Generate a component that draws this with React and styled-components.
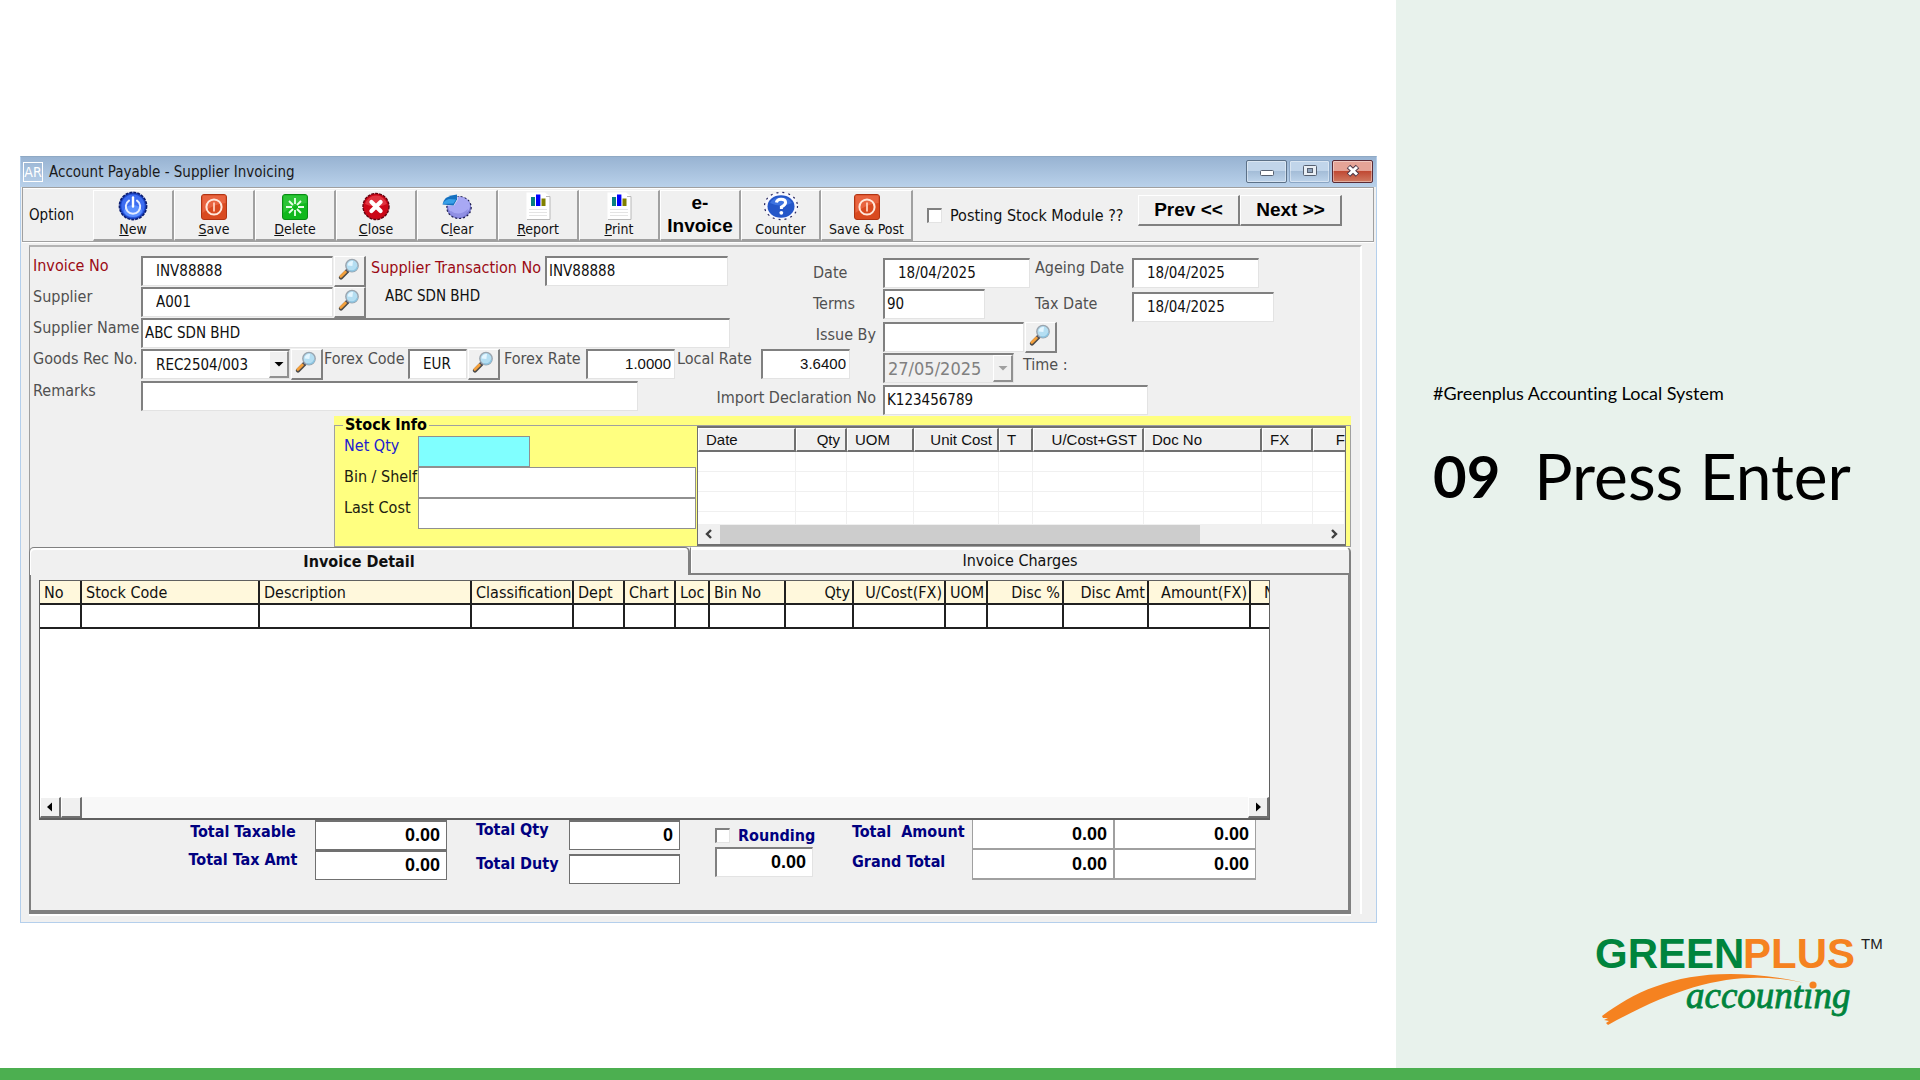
import React, { useState } from "react";
import styled, { createGlobalStyle, css } from "styled-components";

const GlobalStyle = createGlobalStyle`
  * {
    box-sizing: border-box;
  }
  body {
    margin: 0;
    background: #ffffff;
    color: #101010;
    font-family: "DejaVu Sans Condensed", "Noto Sans", sans-serif;
    font-size: 15px;
  }
  input, select, button {
    font-family: inherit;
    font-size: inherit;
    color: inherit;
    border-radius: 0;
    margin: 0;
  }
`;

const Page = styled.div`
  display: flex;
  flex-direction: column;
  min-height: 100vh;
`;

const Slide = styled.div`
  display: flex;
  flex: 1;
`;

const Stage = styled.main`
  flex: 1;
  padding: 156px 19px 0 20px;
`;

const Side = styled.aside`
  display: flex;
  flex-direction: column;
  justify-content: space-between;
  width: 524px;
  padding: 380px 36px 36px 37px;
  background: #e8f2ec;
  color: #000000;
  font-family: Lato, "Open Sans", sans-serif;
  font-variant-ligatures: none;
`;

const Tag = styled.p`
  margin: 0 0 34px;
  font-size: 18px;
  line-height: 26px;
`;

const Step = styled.h1`
  display: flex;
  align-items: center;
  gap: 34px;
  margin: 0;
  font-size: 64px;
  line-height: 72px;
  font-weight: 400;
  white-space: nowrap;

  b {
    font-size: 58px;
    line-height: 66px;
  }
`;

const LogoBox = styled.div`
  align-self: flex-end;
  height: 100px;
`;

const Footer = styled.footer`
  height: 12px;
  background: #4caf50;
`;

const Window = styled.section`
  background: #f0f0f0;
  border: 1px solid #b4cfec;
  border-top-color: #8fa9c4;
`;

const TitleBar = styled.header`
  display: flex;
  align-items: center;
  height: 30px;
  padding: 0 3px 0 2px;
  background: linear-gradient(#98b3d2, #b9d1ea);
  color: #1a1a1a;

  span {
    margin-left: 6px;
    flex: 1;
  }
`;

const AppBadge = styled.i`
  width: 20px;
  height: 20px;
  border: 1px solid #ffffff;
  color: #ffffff;
  font-size: 14px;
  font-style: normal;
  line-height: 18px;
  text-align: center;
`;

const WinButton = styled.button`
  display: flex;
  align-items: center;
  justify-content: center;
  width: 41px;
  height: 23px;
  margin: 0 0 2px 2px;
  padding: 0;
  border: 1px solid ${(p) => (p.$soft ? "#8ba6c5" : "#5c7188")};
  border-radius: 2px;
  background: linear-gradient(#c1d5ea 45%, #a4bdd8 50%, #bdd3ea);
  box-shadow: inset 0 0 0 1px rgba(255, 255, 255, 0.4);

  ${(p) =>
    p.$close &&
    css`
      border-color: #5a2a35;
      background: linear-gradient(#e5a497 45%, #c04a34 50%, #d07a62);
    `}
`;

const Toolbar = styled.nav`
  display: flex;
  height: 55px;
  margin: 0 2px 0 1px;
  padding-top: 2px;
  border: 1px solid #a0a0a0;
  box-shadow: 0 1px 0 #ffffff, inset 0 1px 0 #ffffff;
`;

const OptionText = styled.span`
  width: 70px;
  padding-left: 6px;
  line-height: 50px;
`;

const ToolButton = styled.button`
  display: flex;
  flex-direction: column;
  align-items: center;
  width: ${(p) => p.$width || 81}px;
  height: 51px;
  padding: 0 0 2px;
  border: solid;
  border-width: 1px 2px 2px 1px;
  border-color: #ffffff #a0a0a0 #a0a0a0 #ffffff;
  background: #f0f0f0;
  font-size: 14px;
  line-height: 17px;
  white-space: nowrap;

  svg {
    flex: none;
  }
`;

const BigText = styled.span`
  font-family: "Liberation Sans", Arial, sans-serif;
  font-size: 19px;
  font-weight: 700;
  line-height: 23px;
  color: #000000;
  white-space: pre-line;
`;

const CheckLabel = styled.label`
  display: flex;
  align-items: center;
  gap: 8px;
  white-space: nowrap;
  font-size: 16px;
  font-weight: ${(p) => (p.$bold ? 700 : 400)};
  color: ${(p) => (p.$bold ? "#000080" : "#101010")};
`;

const CheckBox = styled.input.attrs({ type: "checkbox" })`
  appearance: none;
  width: 15px;
  height: 15px;
  border: solid;
  border-width: 2px 1px 1px 2px;
  border-color: #808080 #e3e3e3 #e3e3e3 #808080;
  background: #ffffff;

  &:checked {
    background: #404040;
  }
`;

const ToolbarCheck = styled.div`
  display: flex;
  padding: 0 0 0 14px;
`;

const Pager = styled.div`
  display: flex;
  margin: 5px 31px 0 auto;
`;

const PagerButton = styled.button`
  width: 102px;
  height: 31px;
  padding: 0 0 2px;
  border: solid;
  border-width: 1px 2px 2px 1px;
  border-color: #ffffff #808080 #808080 #ffffff;
  background: #f0f0f0;
`;

const Body = styled.div`
  padding: 3px 14px 8px 8px;
`;

const Panel = styled.div`
  border-top: 2px solid #b4b4b4;
  border-right: 2px solid #ffffff;
  border-left: 1px solid #a0a0a0;
`;

const Form = styled.form`
  display: grid;
  grid-template-columns: 850px 1fr;
  padding: 9px 0 0 3px;
`;

const MainFields = styled.div`
  display: grid;
  grid-template-rows: repeat(3, 31px) repeat(2, 32px);
`;

const DateFields = styled.div`
  display: grid;
  grid-template-rows: 31px 33px 31px 32px 31px;
  padding-top: 2px;
`;

const Row = styled.div`
  display: flex;
  align-items: flex-start;
`;

const Label = styled.label`
  flex: none;
  width: ${(p) => (p.$width ? `${p.$width}px` : "auto")};
  padding-top: ${(p) => p.$drop || 0}px;
  padding-left: ${(p) => p.$indent || 0}px;
  font-size: 16px;
  line-height: 20px;
  white-space: nowrap;
  color: ${(p) => (p.$required ? "#9b0a14" : "#505050")};
`;

const EndLabel = styled(Label)`
  margin-left: auto;
  min-width: ${(p) => (p.$tight ? 0 : 70)}px;
  padding-top: 7px;
  padding-right: ${(p) => (p.$tight ? 7 : 0)}px;
`;

const SupplierText = styled.span`
  padding-left: 18px;
  line-height: 18px;
`;

const sunken = css`
  border: solid;
  border-width: 2px 1px 1px 2px;
  border-color: #808080 #e3e3e3 #e3e3e3 #808080;
  outline: 0;
`;

const Field = styled.input`
  ${sunken}
  flex: none;
  align-self: ${(p) => (p.$low ? "flex-end" : "flex-start")};
  width: ${(p) => p.$width}px;
  height: 30px;
  padding: 0 3px 2px ${(p) => (p.$indent ? 13 : 2)}px;
  background: #ffffff;
  text-align: ${(p) => (p.$number ? "right" : "left")};
  ${(p) => p.$number && 'font-family: "Liberation Sans", Arial, sans-serif;'}
`;

const SelectBox = styled.div`
  ${sunken}
  display: flex;
  width: ${(p) => p.$width}px;
  height: 30px;
  background: ${(p) => (p.$disabled ? "#f0f0f0" : "#ffffff")};
  position: relative;

  select {
    appearance: none;
    flex: 1;
    border: 0;
    outline: 0;
    background: transparent;
    opacity: 1;
    padding: 0 20px 0 ${(p) => (p.$disabled ? 3 : 13)}px;
    font-size: ${(p) => (p.$disabled ? 18 : 15)}px;
    color: ${(p) => (p.$disabled ? "#808080" : "#101010")};
  }
`;

const SelectArrow = styled.span`
  display: flex;
  align-items: center;
  justify-content: center;
  position: absolute;
  top: 0;
  right: 0;
  bottom: 0;
  width: 20px;
  border: solid;
  border-width: 1px 2px 2px 1px;
  border-color: #ffffff #909090 #909090 #ffffff;
  background: #f0f0f0;
  pointer-events: none;
`;

const FindButton = styled.button`
  flex: none;
  width: 32px;
  height: 31px;
  margin: 0 1px;
  padding: 0 2px 4px 0;
  border: solid;
  border-width: 1px 2px 2px 1px;
  border-color: #ffffff #808080 #808080 #ffffff;
  background: #f0f0f0;

  svg {
    display: block;
    margin: 0 auto;
  }
`;

const StockArea = styled.div`
  margin: 0 9px 0 304px;
  background: #ffff80;
`;

const StockBox = styled.fieldset`
  min-width: 0;
  margin: 0;
  padding: 0 4px 0 9px;
  border: 1px solid #a0a0a0;

  legend {
    padding: 0 2px;
    margin-left: -1px;
    font-size: 16px;
    font-weight: 700;
    line-height: 18px;
    color: #000000;
  }
`;

const StockBody = styled.div`
  display: flex;
  height: 112px;
`;

const StockFields = styled.div`
  display: grid;
  grid-template-columns: 74px 278px;
  grid-template-rows: repeat(3, 31px);
  padding-top: 2px;
  flex: none;

  label {
    color: #202010;
  }
  label:first-child {
    color: #2020d0;
  }
`;

const StockInput = styled.input`
  width: ${(p) => (p.$short ? 112 : 278)}px;
  height: 31px;
  border: 1px solid #909090;
  outline: 0;
  background: ${(p) => (p.$short ? "#80ffff" : "#ffffff")};
`;

const History = styled.div`
  display: flex;
  flex-direction: column;
  flex: 1;
  min-width: 0;
  margin-top: -8px;
  margin-left: 1px;
  border: 2px solid #707070;
  border-right-width: 1px;
  border-left-width: 1px;
  background: #ffffff;
  overflow: hidden;
`;

const HistoryTable = styled.table`
  width: 100%;
  border-collapse: separate;
  border-spacing: 0;
  table-layout: fixed;
  font-family: "Liberation Sans", Arial, sans-serif;

  th {
    height: 24px;
    padding: 0 5px 0 7px;
    border: solid;
    border-width: 1px 2px 2px 1px;
    border-color: #ffffff #707070 #707070 #ffffff;
    background: #f0f0f0;
    font-weight: 400;
    overflow: hidden;
    white-space: nowrap;
  }
  th:last-child {
    padding-right: 0;
    border-right: 0;
  }
  td {
    height: 20px;
    padding: 0;
    border: solid #f0f0f0;
    border-width: 0 1px 1px 0;
  }
  tr:last-child td {
    height: 12px;
    border-bottom: 0;
  }
`;

const FlatScroll = styled.div`
  display: flex;
  align-items: center;
  justify-content: space-between;
  height: 20px;
  margin-top: auto;
  padding: 0 6px;
  background: #f0f0f0;
`;

const FlatTrack = styled.div`
  flex: 1;
  height: 19px;
  margin: 0 10px 0 7px;

  &::before {
    content: "";
    display: block;
    width: 80%;
    height: 19px;
    background: #cdcdcd;
  }
`;

const Tabs = styled.div`
  display: flex;
  margin-right: 9px;
  margin-left: -1px;
`;

const Tab = styled.button`
  flex: 1;
  height: 28px;
  padding: 0;
  border: solid;
  border-width: 1px 2px 0 1px;
  border-color: #808080;
  border-radius: 5px 5px 0 0;
  background: #f0f0f0;
  box-shadow: inset 1px 2px 0 #ffffff;
  font-size: 16px;
  font-weight: ${(p) => (p.$active ? 700 : 400)};

  ${(p) =>
    !p.$active &&
    css`
      border-top-color: #ffffff;
      border-bottom: 2px solid #808080;
      border-radius: 0 5px 0 0;
    `}
`;

const TabPage = styled.div`
  margin-right: 9px;
  margin-left: -1px;
  padding: 5px 0 0 8px;
  border: solid #808080;
  border-width: 0 3px 4px 2px;
  box-shadow: 0 2px 0 #ffffff;
`;

const GridBox = styled.div`
  display: flex;
  flex-direction: column;
  max-width: 1231px;
  height: 240px;
  border: 1px solid #606060;
  border-bottom-width: 2px;
  background: #ffffff;
  overflow: hidden;
`;

const GridTable = styled.table`
  width: 100%;
  border-collapse: separate;
  border-spacing: 0;
  table-layout: fixed;
  font-size: 16px;

  th, td {
    height: 24px;
    padding: 0 2px 0 4px;
    border: solid #202020;
    border-width: 0 2px 2px 0;
    white-space: nowrap;
  }
  th {
    background: #fff8dc;
    font-weight: 400;
    overflow: hidden;
  }
  th:last-child, td:last-child {
    padding-left: 13px;
    padding-right: 0;
    border-right: 0;
  }
`;

const ClassicScroll = styled.div`
  display: flex;
  height: 21px;
  margin-top: auto;
  background: #f8f8f8;
`;

const ScrollButton = styled.button`
  display: flex;
  align-items: center;
  justify-content: center;
  width: 21px;
  height: 21px;
  padding: 0;
  border: solid;
  border-width: 1px 2px 2px 1px;
  border-color: #ffffff #707070 #707070 #ffffff;
  background: #f0f0f0;

  &:last-child {
    margin-left: auto;
  }
`;

const Totals = styled.div`
  display: flex;
  align-items: flex-start;
  height: 90px;
  padding-left: 141px;
`;

const TotalGroup = styled.div`
  display: grid;
  grid-template-columns: ${(p) => p.$columns};
  row-gap: ${(p) => p.$gap || 0}px;
  margin-right: ${(p) => p.$space}px;
`;

const TotalLabel = styled.label`
  padding-top: ${(p) => p.$drop || 0}px;
  padding-right: 9px;
  color: #000080;
  font-size: 16px;
  font-weight: 700;
  line-height: 20px;
  white-space: pre;
  text-align: ${(p) => (p.$center ? "center" : "left")};
`;

const TotalInput = styled.input`
  width: 100%;
  height: 30px;
  padding: 0 6px 0 5px;
  border: solid ${(p) => (p.$light ? "#a0a0a0" : "#707070")};
  border-width: ${(p) => (p.$light ? "0 1px 2px 1px" : "2px 1px 1px 1px")};
  outline: 0;
  background: #ffffff;
  color: #000000;
  font-family: "Liberation Sans", Arial, sans-serif;
  font-size: 18px;
  font-weight: 700;
  text-align: right;
`;

const RoundingBox = styled.div`
  width: 104px;
  margin-right: 33px;
  padding-top: 6px;

  ${TotalInput} {
    ${sunken}
    width: 98px;
    margin-top: 2px;
  }
`;

function FindIcon() {
  return (
    <svg width="22" height="22" viewBox="0 0 22 22">
      <path d="M3 19.4 L9.4 13" stroke="#4c4a48" strokeWidth="4.2" strokeLinecap="round" />
      <path d="M2.8 18.4 L7.6 13.8" stroke="#f4a03c" strokeWidth="2.8" strokeLinecap="round" />
      <path d="M8.4 13.4 L10 11.8" stroke="#50505c" strokeWidth="3.4" />
      <circle cx="14" cy="7.6" r="6.2" fill="#b4def2" stroke="#9aa4ae" strokeWidth="1.4" />
      <path d="M9.6 7.4 A4.6 4.6 0 0 1 15 3 L14.4 8 Z" fill="#e4f6ff" />
      <path d="M12 12.6 A5.6 5.6 0 0 0 19.4 9" fill="none" stroke="#8cc4e0" strokeWidth="1.4" />
    </svg>
  );
}

function PowerIcon() {
  return (
    <svg width="30" height="30" viewBox="0 0 30 30">
      <circle cx="15" cy="15" r="13.6" fill="#1c46c8" stroke="#0a1c70" strokeWidth="1.6" strokeDasharray="3 1" />
      <circle cx="15" cy="15" r="11.6" fill="#3c6cf0" />
      <ellipse cx="15" cy="20" rx="9" ry="6" fill="#5c90ff" />
      <path d="M11 9.6 a7.2 7.2 0 1 0 8 0" fill="none" stroke="#e4ecff" strokeWidth="2" strokeLinecap="round" />
      <path d="M15 6.5 V15.5" stroke="#ffffff" strokeWidth="2.4" strokeLinecap="round" />
    </svg>
  );
}

function SaveIcon() {
  return (
    <svg width="30" height="30" viewBox="0 0 30 30">
      <rect x="2.5" y="3.5" width="25" height="25" rx="2.5" fill="#d94a20" stroke="#b03414" />
      <path d="M3.5 4.5 H26.5 V12 Q14 13 3.5 22 Z" fill="#e86440" />
      <circle cx="15" cy="16" r="7.6" fill="none" stroke="#ffe8dc" strokeWidth="2" />
      <path d="M15 11.5 V20.5" stroke="#ffd0bc" strokeWidth="1.8" />
    </svg>
  );
}

function DeleteIcon() {
  return (
    <svg width="30" height="30" viewBox="0 0 30 30">
      <rect x="2.5" y="3.5" width="25" height="25" rx="2.5" fill="#10b81c" stroke="#0a8a14" />
      <path d="M3.5 4.5 H26.5 V12 Q14 13 3.5 22 Z" fill="#2cc436" />
      <g stroke="#e8ffe8" strokeWidth="1.8">
        <path d="M15 7 V13 M15 19 V25 M6 16 H12 M18 16 H24" />
        <path d="M9 10 L13 14 M17 18 L21 22 M21 10 L17 14 M13 18 L9 22" />
      </g>
    </svg>
  );
}

function CloseIcon() {
  return (
    <svg width="30" height="30" viewBox="0 0 30 30">
      <circle cx="15" cy="15.5" r="13" fill="#cc0818" stroke="#600410" strokeWidth="1.4" strokeDasharray="3 1" />
      <path d="M4 13 A11.4 11.4 0 0 1 26 13 Q15 18 4 13" fill="#e03440" />
      <path d="M10.4 10.9 L19.6 20.1 M19.6 10.9 L10.4 20.1" stroke="#ffffff" strokeWidth="4.2" strokeLinecap="round" />
    </svg>
  );
}

function ClearIcon() {
  return (
    <svg width="32" height="30" viewBox="0 0 32 30">
      <ellipse cx="18" cy="16.5" rx="12.2" ry="11" fill="#7c7cd4" stroke="#202050" strokeWidth="1.2" strokeDasharray="2 2" />
      <ellipse cx="18" cy="15" rx="11" ry="9.2" fill="#a8a8f4" />
      <path d="M10 20 Q18 26 27 18 Q26 26 18 26.4 Q11 26 8 21 Z" fill="#9090e4" />
      <path d="M0 2 H16.5 V9 L13 14.5 H0 Z" fill="#f0f0f0" />
      <path d="M1.5 13.5 Q3 4.5 16 3.5 L16 8.5 L12.5 14.5 Z" fill="#1470c0" />
      <path d="M1.8 13 Q3.5 9 8 8 L15 8.5 L12.5 12.5 Z" fill="#38a0e8" />
    </svg>
  );
}

function ReportIcon() {
  return (
    <svg width="30" height="30" viewBox="0 0 30 30">
      <path d="M3.5 1.5 H22 L27 5.5 V28.5 H3.5 Z" fill="#ffffff" />
      <path d="M23 5.5 H27 V28.5 H4" fill="none" stroke="#b8b8b8" />
      <rect x="8" y="6" width="4" height="9" fill="#088080" />
      <rect x="13" y="3.5" width="4.4" height="11.5" fill="#0000ff" />
      <rect x="18.5" y="7.5" width="4" height="7.5" fill="#808000" />
      <path d="M6 18.5 H24 M6 21.5 H24 M6 24.5 H24" stroke="#e4e4e4" />
    </svg>
  );
}

function HelpIcon() {
  return (
    <svg width="36" height="30" viewBox="0 0 36 30">
      <ellipse cx="18" cy="15" rx="16.5" ry="13.6" fill="#f8f8ff" stroke="#282860" strokeWidth="1.2" strokeDasharray="2 4" />
      <ellipse cx="18" cy="15.5" rx="13.5" ry="11.2" fill="#2456c8" />
      <path d="M7 12 A12 9 0 0 1 29 12 Q18 17 7 12" fill="#3c72e0" />
      <path d="M13.4 11.6 Q14 8.2 18 8.2 Q22.6 8.2 22.6 11.6 Q22.6 13.8 18.4 16 V18" fill="none" stroke="#ffffff" strokeWidth="3" />
      <circle cx="18.3" cy="21.8" r="1.9" fill="#ffffff" />
    </svg>
  );
}

function Arrow({ d, color = "#000000" }) {
  return (
    <svg width="10" height="10" viewBox="0 0 10 10">
      <path d={d} fill={color} />
    </svg>
  );
}

function Chevron({ d }) {
  return (
    <svg width="9" height="12" viewBox="0 0 9 12">
      <path d={d} fill="none" stroke="#404040" strokeWidth="2.4" />
    </svg>
  );
}

function Logo() {
  return (
    <LogoBox>
      <svg width="290" height="100" viewBox="0 0 290 100" role="img" aria-label="Greenplus accounting">
        <g fontFamily='"Liberation Sans", Arial, sans-serif'>
          <text x="1" y="36" fontSize="42" fontWeight="700" fill="#00843d">
            GREEN
          </text>
          <text x="149" y="36" fontSize="42" fontWeight="700" fill="#f58220">
            PLUS
          </text>
          <text x="267" y="17" fontSize="15" fill="#202020">
            TM
          </text>
        </g>
        <path
          d="M8 84 C50 52 110 28 211 51 C150 38 95 48 14 93 L12 91 L15 89 L10 88 L14 86 L9 86 Z"
          fill="#f58220"
        />
        <text
          x="92"
          y="76"
          fontSize="37"
          fontStyle="italic"
          fontFamily='"Liberation Serif", serif'
          fill="#00843d"
          stroke="#00843d"
          strokeWidth="0.8"
        >
          accounting
        </text>
        <rect x="213" y="48" width="12" height="9" fill="#e8f2ec" />
        <circle cx="219" cy="53" r="3.6" fill="#f58220" />
      </svg>
    </LogoBox>
  );
}

const tools = [
  { key: "N", rest: "ew", icon: <PowerIcon /> },
  { key: "S", rest: "ave", icon: <SaveIcon /> },
  { key: "D", rest: "elete", icon: <DeleteIcon /> },
  { key: "C", rest: "lose", icon: <CloseIcon /> },
  { before: "C", key: "l", rest: "ear", icon: <ClearIcon /> },
  { key: "R", rest: "eport", icon: <ReportIcon /> },
  { key: "P", rest: "rint", icon: <ReportIcon /> },
];

const historyColumns = [
  { name: "Date", width: 98 },
  { name: "Qty", width: 51, right: true },
  { name: "UOM", width: 67 },
  { name: "Unit Cost", width: 85, right: true },
  { name: "T", width: 34 },
  { name: "U/Cost+GST", width: 111, right: true },
  { name: "Doc No", width: 118 },
  { name: "FX", width: 51 },
  { name: "F", right: true },
];

const detailColumns = [
  { name: "No", width: 42 },
  { name: "Stock Code", width: 178 },
  { name: "Description", width: 212 },
  { name: "Classification", width: 102 },
  { name: "Dept", width: 51 },
  { name: "Chart", width: 51 },
  { name: "Loc", width: 34 },
  { name: "Bin No", width: 76 },
  { name: "Qty", width: 68, right: true },
  { name: "U/Cost(FX)", width: 92, right: true },
  { name: "UOM", width: 42 },
  { name: "Disc %", width: 76, right: true },
  { name: "Disc Amt", width: 85, right: true },
  { name: "Amount(FX)", width: 102, right: true },
  { name: "N" },
];

function Columns({ list, rows }) {
  return (
    <>
      <colgroup>
        {list.map((c) => (
          <col key={c.name} width={c.width} />
        ))}
      </colgroup>
      <thead>
        <tr>
          {list.map((c) => (
            <th key={c.name} align={c.right ? "right" : "left"}>
              {c.name}
            </th>
          ))}
        </tr>
      </thead>
      <tbody>
        {Array.from({ length: rows }, (_, i) => (
          <tr key={i}>
            {list.map((c) => (
              <td key={c.name} />
            ))}
          </tr>
        ))}
      </tbody>
    </>
  );
}

function Find({ label }) {
  return (
    <FindButton type="button" aria-label={label}>
      <FindIcon />
    </FindButton>
  );
}

function InvoiceForm() {
  return (
    <Form>
      <MainFields>
        <Row>
          <Label $required $width={108} htmlFor="invoiceNo">Invoice No</Label>
          <Field $indent $width={192} id="invoiceNo" defaultValue="INV88888" />
          <Find label="Find invoice" />
          <Label $required $drop={2} $indent={4} $width={178} htmlFor="transNo">
            Supplier Transaction No
          </Label>
          <Field $width={183} id="transNo" defaultValue="INV88888" />
          <EndLabel htmlFor="date">Date</EndLabel>
        </Row>
        <Row>
          <Label $width={108} htmlFor="supplier">Supplier</Label>
          <Field $indent $width={192} id="supplier" defaultValue="A001" />
          <Find label="Find supplier" />
          <SupplierText>ABC SDN BHD</SupplierText>
          <EndLabel htmlFor="terms">Terms</EndLabel>
        </Row>
        <Row>
          <Label $width={108} htmlFor="supplierName">Supplier Name</Label>
          <Field $width={589} id="supplierName" defaultValue="ABC SDN BHD" />
          <EndLabel $tight htmlFor="issueBy">Issue By</EndLabel>
        </Row>
        <Row>
          <Label $width={108} htmlFor="goodsRec">Goods Rec No.</Label>
          <SelectBox $width={149}>
            <select id="goodsRec">
              <option>REC2504/003</option>
            </select>
            <SelectArrow>
              <Arrow d="M0.5 3 H9.5 L5 7.5 Z" />
            </SelectArrow>
          </SelectBox>
          <Find label="Find goods received" />
          <Label $width={84} htmlFor="forexCode">Forex Code</Label>
          <Field $indent $width={59} id="forexCode" defaultValue="EUR" />
          <Find label="Find forex code" />
          <Label $indent={3} $width={85} htmlFor="forexRate">Forex Rate</Label>
          <Field $number $width={89} id="forexRate" defaultValue="1.0000" />
          <Label $indent={2} $width={86} htmlFor="localRate">Local Rate</Label>
          <Field $number $width={89} id="localRate" defaultValue="3.6400" />
        </Row>
        <Row>
          <Label $width={108} htmlFor="remarks">Remarks</Label>
          <Field $width={497} id="remarks" />
          <EndLabel $tight htmlFor="importNo">Import Declaration No</EndLabel>
        </Row>
      </MainFields>
      <DateFields>
        <Row>
          <Field $indent $width={147} id="date" defaultValue="18/04/2025" />
          <Label $indent={5} $width={102} htmlFor="ageing">Ageing Date</Label>
          <Field $indent $width={127} id="ageing" defaultValue="18/04/2025" />
        </Row>
        <Row>
          <Field $width={102} id="terms" defaultValue="90" />
          <Label $drop={5} $indent={50} $width={147} htmlFor="taxDate">Tax Date</Label>
          <Field $indent $low $width={142} id="taxDate" defaultValue="18/04/2025" />
        </Row>
        <Row>
          <Field $width={141} id="issueBy" />
          <Find label="Find issuer" />
        </Row>
        <Row>
          <SelectBox $disabled $width={131}>
            <select id="time" disabled>
              <option>27/05/2025</option>
            </select>
            <SelectArrow>
              <Arrow d="M0.5 3 H9.5 L5 7.5 Z" color="#a0a0a0" />
            </SelectArrow>
          </SelectBox>
          <Label $drop={2} $indent={9} htmlFor="time">Time :</Label>
        </Row>
        <Row>
          <Field $width={265} id="importNo" defaultValue="K123456789" />
        </Row>
      </DateFields>
    </Form>
  );
}

function StockInfo() {
  return (
    <StockArea>
      <StockBox>
        <legend>Stock Info</legend>
        <StockBody>
          <StockFields>
            <Label htmlFor="netQty">Net Qty</Label>
            <StockInput $short id="netQty" />
            <Label htmlFor="bin">Bin / Shelf</Label>
            <StockInput id="bin" />
            <Label htmlFor="lastCost">Last Cost</Label>
            <StockInput id="lastCost" />
          </StockFields>
          <History>
            <HistoryTable>
              <Columns list={historyColumns} rows={4} />
            </HistoryTable>
            <FlatScroll>
              <Chevron d="M7 2 L3 6 L7 10" />
              <FlatTrack />
              <Chevron d="M2 2 L6 6 L2 10" />
            </FlatScroll>
          </History>
        </StockBody>
      </StockBox>
    </StockArea>
  );
}

function InvoiceTotals() {
  return (
    <Totals>
      <TotalGroup $columns="135px 132px" $space={29}>
        <TotalLabel $center $drop={2} htmlFor="taxable">Total Taxable</TotalLabel>
        <TotalInput id="taxable" defaultValue="0.00" />
        <TotalLabel $center htmlFor="taxAmt">Total Tax Amt</TotalLabel>
        <TotalInput id="taxAmt" defaultValue="0.00" />
      </TotalGroup>
      <TotalGroup $columns="93px 111px" $gap={4} $space={35}>
        <TotalLabel htmlFor="totalQty">Total Qty</TotalLabel>
        <TotalInput id="totalQty" defaultValue="0" />
        <TotalLabel htmlFor="duty">Total Duty</TotalLabel>
        <TotalInput id="duty" />
      </TotalGroup>
      <RoundingBox>
        <CheckLabel $bold>
          <CheckBox />
          Rounding
        </CheckLabel>
        <TotalInput aria-label="Rounding amount" defaultValue="0.00" />
      </RoundingBox>
      <TotalGroup $columns="120px 142px 142px" $space={0}>
        <TotalLabel $drop={2} htmlFor="amount">{"Total  Amount"}</TotalLabel>
        <TotalInput $light id="amount" defaultValue="0.00" />
        <TotalInput $light aria-label="Total amount local" defaultValue="0.00" />
        <TotalLabel $drop={2} htmlFor="grand">Grand Total</TotalLabel>
        <TotalInput $light id="grand" defaultValue="0.00" />
        <TotalInput $light aria-label="Grand total local" defaultValue="0.00" />
      </TotalGroup>
    </Totals>
  );
}

function App() {
  const [tab, setTab] = useState("detail");

  return (
    <Page>
      <GlobalStyle />
      <Slide>
        <Stage>
          <Window>
            <TitleBar>
              <AppBadge>AR</AppBadge>
              <span>Account Payable - Supplier Invoicing</span>
              <WinButton aria-label="Minimize">
                <svg width="16" height="12" viewBox="0 0 16 12">
                  <rect x="1.5" y="5.5" width="13" height="5" rx="1" fill="#ffffff" stroke="#566070" />
                </svg>
              </WinButton>
              <WinButton $soft aria-label="Maximize">
                <svg width="16" height="14" viewBox="0 0 16 14">
                  <rect x="1.5" y="1.5" width="13" height="10" rx="1" fill="#e8eef4" stroke="#566070" />
                  <rect x="5.5" y="4.5" width="5" height="4" fill="#90a4bc" stroke="#566070" />
                </svg>
              </WinButton>
              <WinButton $close aria-label="Close window">
                <svg width="16" height="14" viewBox="0 0 16 14">
                  <path d="M3.5 2.5 L12.5 11 M12.5 2.5 L3.5 11" stroke="#4c3848" strokeWidth="5" />
                  <path d="M4 3 L12 10.5 M12 3 L4 10.5" stroke="#ffffff" strokeWidth="3" />
                </svg>
              </WinButton>
            </TitleBar>
            <Toolbar>
              <OptionText>Option</OptionText>
              {tools.map((t) => (
                <ToolButton key={t.key + t.rest}>
                  {t.icon}
                  <span>
                    {t.before}
                    <u>{t.key}</u>
                    {t.rest}
                  </span>
                </ToolButton>
              ))}
              <ToolButton>
                <BigText>{"e-\nInvoice"}</BigText>
              </ToolButton>
              <ToolButton $width={80}>
                <HelpIcon />
                <span>Counter</span>
              </ToolButton>
              <ToolButton $width={92}>
                <SaveIcon />
                <span>Save &amp; Post</span>
              </ToolButton>
              <ToolbarCheck>
                <CheckLabel>
                  <CheckBox />
                  Posting Stock Module ??
                </CheckLabel>
              </ToolbarCheck>
              <Pager>
                <PagerButton>
                  <BigText>Prev &lt;&lt;</BigText>
                </PagerButton>
                <PagerButton>
                  <BigText>Next &gt;&gt;</BigText>
                </PagerButton>
              </Pager>
            </Toolbar>
            <Body>
              <Panel>
                <InvoiceForm />
                <StockInfo />
                <Tabs>
                  <Tab $active={tab === "detail"} onClick={() => setTab("detail")}>
                    Invoice Detail
                  </Tab>
                  <Tab $active={tab === "charges"} onClick={() => setTab("charges")}>
                    Invoice Charges
                  </Tab>
                </Tabs>
                <TabPage>
                  <GridBox>
                    <GridTable>
                      <Columns list={detailColumns} rows={1} />
                    </GridTable>
                    <ClassicScroll>
                      <ScrollButton aria-label="Scroll left">
                        <Arrow d="M7 0.5 V9.5 L2 5 Z" />
                      </ScrollButton>
                      <ScrollButton aria-label="Scroll thumb" />
                      <ScrollButton aria-label="Scroll right">
                        <Arrow d="M3 0.5 V9.5 L8 5 Z" />
                      </ScrollButton>
                    </ClassicScroll>
                  </GridBox>
                  <InvoiceTotals />
                </TabPage>
              </Panel>
            </Body>
          </Window>
        </Stage>
        <Side>
          <div>
            <Tag>#Greenplus Accounting Local System</Tag>
            <Step>
              <b>09</b>
              <span>Press Enter</span>
            </Step>
          </div>
          <Logo />
        </Side>
      </Slide>
      <Footer />
    </Page>
  );
}

export default App;
